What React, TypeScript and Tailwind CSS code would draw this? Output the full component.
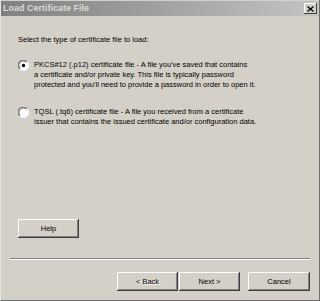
export default function App() {
  const btn =
    "h-[19px] bg-[#d4d0c8] shadow-[inset_-1px_-1px_#404040,inset_1px_1px_#ffffff,inset_-2px_-2px_#808080] flex items-center justify-center text-[7.5px] text-black";

  return (
    <div className="w-[320px] h-[301px] bg-[#d4d0c8] flex flex-col font-['Liberation_Sans',Arial,sans-serif] border-r border-b border-[#6e6e6e] border-l border-l-[#e6e4de] overflow-hidden">
      {/* Title bar */}
      <div className="mt-[1px] h-[15px] bg-gradient-to-r from-[#808080] to-[#c4c4c4] flex items-center justify-between pl-[2px] pr-[2px]">
        <span className="text-[9px] font-bold text-[#dcdad4] leading-none">Load Certificate File</span>
        <div className="w-[13px] h-[11px] bg-[#d4d0c8] shadow-[inset_-1px_-1px_#404040,inset_1px_1px_#ffffff] flex items-center justify-center">
          <svg width="7" height="6" viewBox="0 0 7 6">
            <path d="M0.5 0.5 L6.5 5.5 M6.5 0.5 L0.5 5.5" stroke="#000" strokeWidth="1.3" />
          </svg>
        </div>
      </div>

      {/* Body */}
      <div className="pl-[17px] pt-[19px] text-[7.5px] leading-[10px] text-black">
        <p>Select the type of certificate file to load:</p>

        <div className="flex gap-[5px] mt-[15px]">
          <Radio checked />
          <p>
            PKCS#12 (.p12) certificate file - A file you've saved that contains
            <br />a certificate and/or private key. This file is typically password
            <br />protected and you'll need to provide a password in order to open it.
          </p>
        </div>

        <div className="flex gap-[5px] mt-[17px]">
          <Radio />
          <p>
            TQSL (.tq6) certificate file - A file you received from a certificate
            <br />issuer that contains the issued certificate and/or configuration data.
          </p>
        </div>
      </div>

      <div className="pl-[17px] mt-[92px]">
        <button className={`${btn} w-[61px]`}>Help</button>
      </div>

      {/* Separator */}
      <div className="mx-[9px] mt-[20px] border-t border-[#808080] border-b border-b-white" />

      {/* Footer buttons */}
      <div className="flex justify-end pr-[9px] mt-[12px]">
        <button className={`${btn} w-[61px] text-[#9a9894] [text-shadow:1px_1px_0_#ffffff]`}>&lt; Back</button>
        <button className={`${btn} w-[61px] ml-[1px]`}>Next &gt;</button>
        <button className={`${btn} w-[62px] ml-[8px]`}>Cancel</button>
      </div>
    </div>
  );
}

function Radio({ checked = false }: { checked?: boolean }) {
  return (
    <svg width="11" height="11" viewBox="0 0 12 12" className="shrink-0">
      <circle cx="6" cy="6" r="5.5" fill="#ffffff" />
      <path d="M1.5 10 A5.5 5.5 0 0 1 10 1.5" stroke="#808080" strokeWidth="1" fill="none" />
      <path d="M2.3 9.2 A4.5 4.5 0 0 1 9.2 2.3" stroke="#404040" strokeWidth="1" fill="none" />
      <path d="M10 1.8 A5.5 5.5 0 0 1 1.8 10" stroke="#f4f4f4" strokeWidth="1" fill="none" />
      {checked && <circle cx="6" cy="6" r="1.8" fill="#000000" />}
    </svg>
  );
}
